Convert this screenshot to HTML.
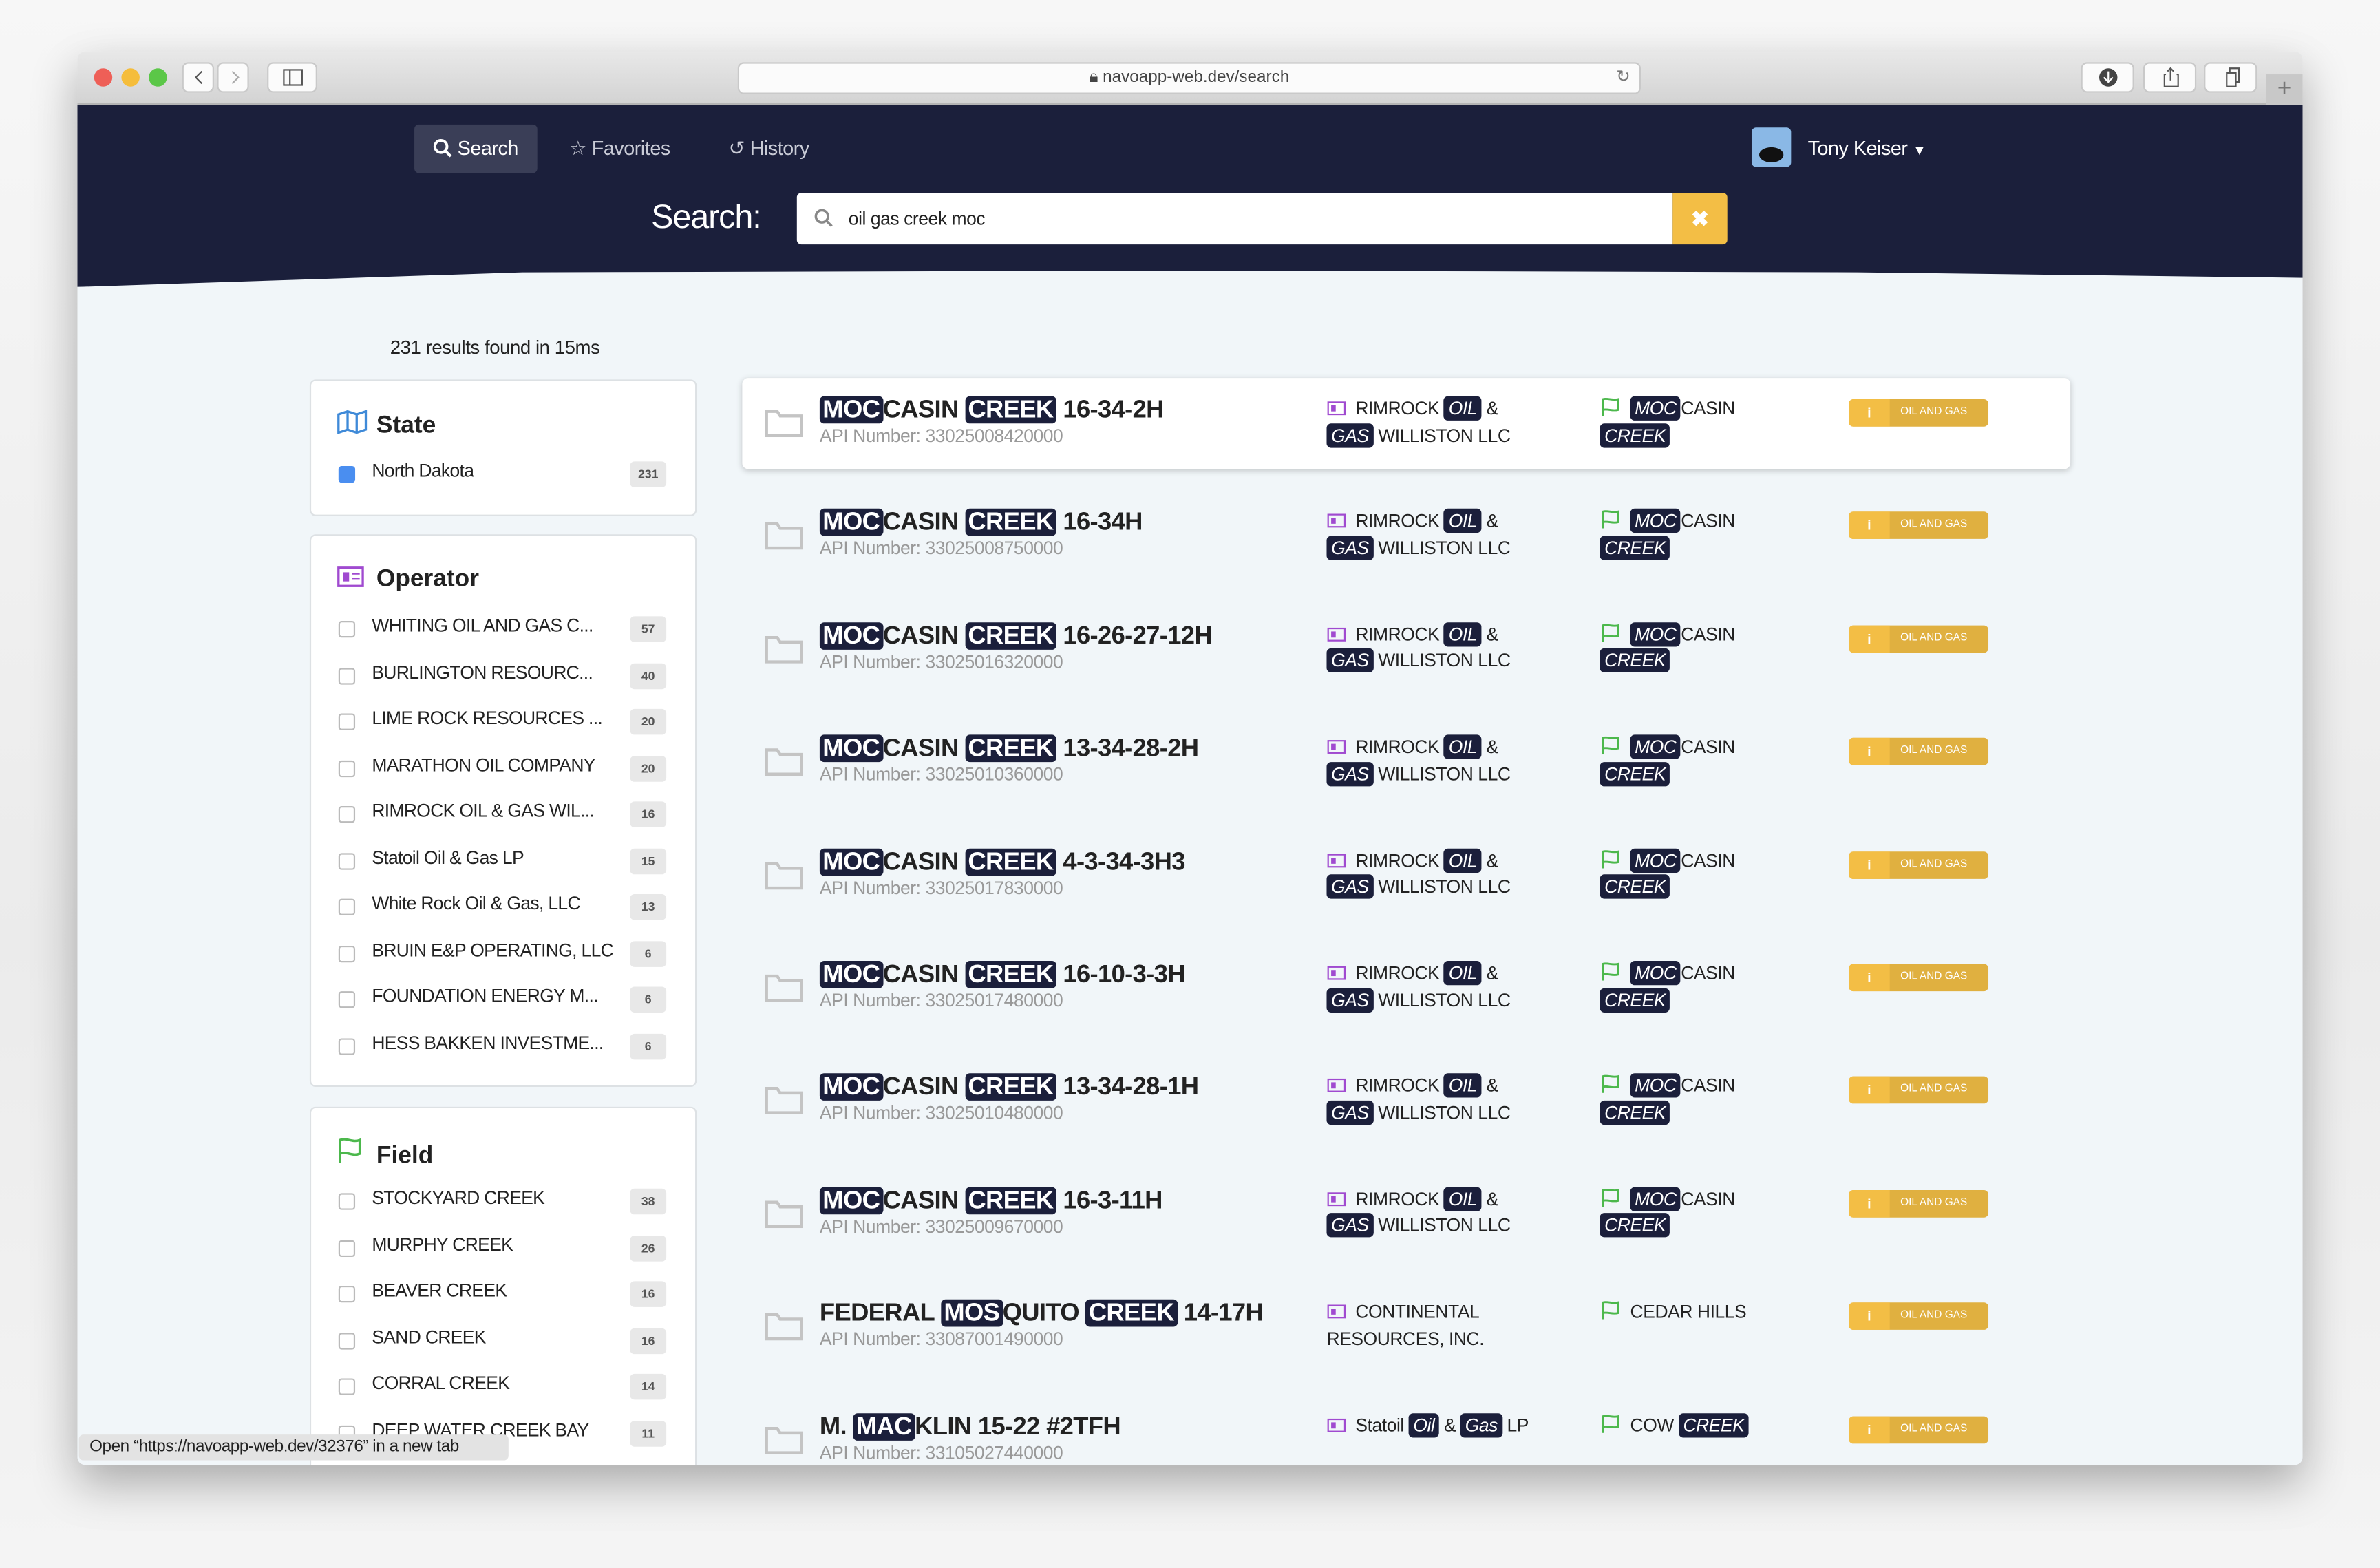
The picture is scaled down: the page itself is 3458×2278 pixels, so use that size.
<!DOCTYPE html>
<html><head><meta charset="utf-8"><style>
*{box-sizing:border-box;margin:0;padding:0}
html,body{width:3458px;height:2278px;overflow:hidden;background:#ececec}
#s{position:absolute;left:0;top:0;width:1568px;height:1033px;transform:scale(2.20536);transform-origin:0 0;font-family:"Liberation Sans",sans-serif;background:linear-gradient(#f7f7f7,#ebebeb 60%,#f4f4f4)}
.a{position:absolute}
#win{left:51px;top:34px;width:1466px;height:931px;background:#f1f6f9;border-radius:5px;overflow:hidden;box-shadow:0 12px 30px rgba(0,0,0,.3)}
#tb{left:0;top:0;width:1466px;height:35px;background:linear-gradient(#e8e8e8,#d3d3d3);border-bottom:1px solid #b5b5b5}
.dot{width:12px;height:12px;border-radius:50%;top:11px}
.btn{background:#fbfbfb;border:1px solid #c9c9c9;border-radius:4px;height:20px;top:7px}
#hdr{left:0;top:35px;width:1466px;height:120px;background:#1b1f3b;clip-path:polygon(0 0,100% 0,100% 95%,80% 92%,50% 91%,20% 92%,0 100%)}
.nav{color:#c9cbd6;font-size:13px;top:56px;letter-spacing:-.2px}
.card{background:#fff;border:1px solid #dde1e4;border-radius:4px}
.ft{font-size:16px;font-weight:bold;color:#222}
.it{font-size:12px;color:#222;left:40px;letter-spacing:-.3px;white-space:nowrap}
.cb{left:18px;width:11px;height:11px;border:1px solid #bbb;border-radius:2px;background:#fff}
.cnt{left:210px;width:24px;height:17px;background:#e8e8e8;border-radius:3px;font-size:8px;font-weight:bold;color:#555;text-align:center;line-height:17px}
.row{position:absolute;left:489px;width:875px;height:60px}
.t{position:absolute;left:51px;top:10px;font-size:16.5px;font-weight:bold;color:#222;white-space:nowrap;line-height:22px;letter-spacing:-.3px}
.h{background:#1b1f3b;color:#fff;border-radius:3px;padding:0 2px}
.api{position:absolute;left:51px;top:31px;font-size:12px;color:#999;white-space:nowrap;letter-spacing:-.2px}
.op,.fd{position:absolute;top:12px;font-size:12px;color:#222;line-height:17.5px;width:128px;letter-spacing:-.2px}
.op{left:385px}.fd{left:565px;width:100px}
.op .h,.fd .h{font-style:italic;padding:1px 3px}
.bd{position:absolute;left:729px;top:14px;width:92px;height:18px;border-radius:3px;background:#e0b040;overflow:hidden;font-size:7px;color:#fff;line-height:18px}
.bd i{position:absolute;left:0;top:0;width:27px;height:18px;background:#f3be45;font-style:normal;font-weight:bold;text-align:center;font-size:9px}
.bd b{position:absolute;left:34px;font-weight:normal}
.fo{position:absolute;left:15px;top:20px}
.oi{display:inline-block;vertical-align:-1px;margin-right:6px}
</style></head><body><div id="s">
<div id="win" class="a">
 <div id="tb" class="a">
  <div class="a dot" style="left:11px;background:#ee5f57"></div>
  <div class="a dot" style="left:29px;background:#f5bd3b"></div>
  <div class="a dot" style="left:47px;background:#5bc748"></div>
  <div class="a btn" style="left:69px;width:21px"><svg width="21" height="18"><path d="M12 5l-4 4 4 4" stroke="#555" fill="none"/></svg></div>
  <div class="a btn" style="left:92px;width:21px"><svg width="21" height="18"><path d="M9 5l4 4-4 4" stroke="#aaa" fill="none"/></svg></div>
  <div class="a btn" style="left:125px;width:33px"><svg width="33" height="18"><rect x="10" y="4" width="12" height="10" stroke="#555" fill="none"/><line x1="14" y1="4" x2="14" y2="14" stroke="#555"/></svg></div>
  <div class="a btn" style="left:435px;width:595px;height:21px;text-align:center;font-size:11px;color:#444;line-height:19px">🔒︎ navoapp-web.dev/search<span style="position:absolute;right:6px;color:#777">↻</span></div>
  <div class="a btn" style="left:1320px;width:35px"><svg width="35" height="18"><circle cx="17" cy="9" r="6" fill="#444"/><path d="M17 5v7M14 9l3 3 3-3" stroke="#fff" fill="none"/></svg></div>
  <div class="a btn" style="left:1361px;width:35px"><svg width="35" height="18"><path d="M14 7h-1v8h9v-8h-1M17 3v8M15 5l2-2 2 2" stroke="#555" fill="none"/></svg></div>
  <div class="a btn" style="left:1401px;width:35px"><svg width="35" height="18"><rect x="14" y="6" width="6" height="9" stroke="#555" fill="none"/><path d="M16 6V3h6v9h-2" stroke="#555" fill="none"/></svg></div>
  <div class="a" style="left:1442px;top:15px;width:24px;height:20px;background:#c8c8c8;color:#777;text-align:center;font-size:16px;line-height:20px">+</div>
 </div>
 <div id="hdr" class="a"></div>
 <div class="a" style="left:222px;top:48px;width:81px;height:32px;background:#3a3e57;border-radius:3px"></div>
 <div class="a nav" style="left:234px;color:#fff"><svg width="13" height="13" style="vertical-align:-2px"><circle cx="5.5" cy="5.5" r="4" stroke="#fff" stroke-width="1.8" fill="none"/><path d="M8.5 8.5l3.5 3.5" stroke="#fff" stroke-width="1.8"/></svg> Search</div>
 <div class="a nav" style="left:324px">☆ Favorites</div>
 <div class="a nav" style="left:429px">↺ History</div>
 <div class="a" style="left:1103px;top:50px;width:26px;height:26px;background:#8ab8e6;border-radius:3px"><div style="position:absolute;left:5px;top:13px;width:16px;height:10px;background:#111;border-radius:50%"></div></div>
 <div class="a" style="left:1140px;top:56px;font-size:13px;color:#fff;letter-spacing:-.2px">Tony Keiser <span style="font-size:9px">▼</span></div>
 <div class="a" style="left:378px;top:96px;font-size:22px;color:#fff;letter-spacing:-.5px">Search:</div>
 <div class="a" style="left:474px;top:93px;width:577px;height:34px;background:#fff;border-radius:3px 0 0 3px"></div>
 <div class="a" style="left:485px;top:103px"><svg width="13" height="13"><circle cx="5.5" cy="5.5" r="4" stroke="#888" stroke-width="1.6" fill="none"/><path d="M8.5 8.5l3.5 3.5" stroke="#888" stroke-width="1.6"/></svg></div>
 <div class="a" style="left:508px;top:103px;font-size:12px;color:#222;letter-spacing:-.2px">oil gas creek moc</div>
 <div class="a" style="left:1051px;top:93px;width:36px;height:34px;background:#f3be45;border-radius:0 3px 3px 0;color:#fff;text-align:center;line-height:34px;font-weight:bold;font-size:14px">✖</div>
</div>

<div class="a" style="left:257px;top:222px;font-size:12.5px;color:#222;letter-spacing:-.2px">231 results found in 15ms</div>

<div class="a card" style="left:204px;top:250px;width:255px;height:90px">
 <div class="a ft" style="left:17px;top:19px"><svg class="oi" width="20" height="16"><path d="M1 3l6-2 6 2 6-2v12l-6 2-6-2-6 2z M7 1v12 M13 3v12" stroke="#3f8ad8" stroke-width="1.5" fill="none"/></svg>State</div>
 <div class="a cb" style="top:56px;background:#4a8ef0;border-color:#4a8ef0"></div>
 <div class="a it" style="top:52px">North Dakota</div>
 <div class="a cnt" style="top:53px">231</div>
</div>

<div class="a card" style="left:204px;top:352px;width:255px;height:364px">
 <div class="a ft" style="left:17px;top:20px"><svg class="oi" width="20" height="14"><rect x="1" y="1" width="16" height="12" stroke="#a04ad0" stroke-width="1.5" fill="none"/><rect x="4" y="4" width="4" height="6" fill="#a04ad0"/><path d="M10 5h5M10 8h5" stroke="#a04ad0"/></svg>Operator</div>
 <div class="a cb" style="top:56px"></div><div class="a it" style="top:52px">WHITING OIL AND GAS C...</div><div class="a cnt" style="top:53px">57</div>
 <div class="a cb" style="top:87px"></div><div class="a it" style="top:83px">BURLINGTON RESOURC...</div><div class="a cnt" style="top:84px">40</div>
 <div class="a cb" style="top:117px"></div><div class="a it" style="top:113px">LIME ROCK RESOURCES ...</div><div class="a cnt" style="top:114px">20</div>
 <div class="a cb" style="top:148px"></div><div class="a it" style="top:144px">MARATHON OIL COMPANY</div><div class="a cnt" style="top:145px">20</div>
 <div class="a cb" style="top:178px"></div><div class="a it" style="top:174px">RIMROCK OIL &amp; GAS WIL...</div><div class="a cnt" style="top:175px">16</div>
 <div class="a cb" style="top:209px"></div><div class="a it" style="top:205px">Statoil Oil &amp; Gas LP</div><div class="a cnt" style="top:206px">15</div>
 <div class="a cb" style="top:239px"></div><div class="a it" style="top:235px">White Rock Oil &amp; Gas, LLC</div><div class="a cnt" style="top:236px">13</div>
 <div class="a cb" style="top:270px"></div><div class="a it" style="top:266px">BRUIN E&amp;P OPERATING, LLC</div><div class="a cnt" style="top:267px">6</div>
 <div class="a cb" style="top:300px"></div><div class="a it" style="top:296px">FOUNDATION ENERGY M...</div><div class="a cnt" style="top:297px">6</div>
 <div class="a cb" style="top:331px"></div><div class="a it" style="top:327px">HESS BAKKEN INVESTME...</div><div class="a cnt" style="top:328px">6</div>
</div>

<div class="a card" style="left:204px;top:729px;width:255px;height:236px;border-bottom:none;border-radius:4px 4px 0 0;overflow:hidden">
 <div class="a ft" style="left:17px;top:19px"><svg class="oi" width="20" height="18"><path d="M2 17V2c4-2 8 2 13 0v9c-5 2-9-2-13 0" stroke="#4cb84c" stroke-width="1.6" fill="none"/></svg>Field</div>
 <div class="a cb" style="top:56px"></div><div class="a it" style="top:52px">STOCKYARD CREEK</div><div class="a cnt" style="top:53px">38</div>
 <div class="a cb" style="top:87px"></div><div class="a it" style="top:83px">MURPHY CREEK</div><div class="a cnt" style="top:84px">26</div>
 <div class="a cb" style="top:117px"></div><div class="a it" style="top:113px">BEAVER CREEK</div><div class="a cnt" style="top:114px">16</div>
 <div class="a cb" style="top:148px"></div><div class="a it" style="top:144px">SAND CREEK</div><div class="a cnt" style="top:145px">16</div>
 <div class="a cb" style="top:178px"></div><div class="a it" style="top:174px">CORRAL CREEK</div><div class="a cnt" style="top:175px">14</div>
 <div class="a cb" style="top:209px"></div><div class="a it" style="top:205px">DEEP WATER CREEK BAY</div><div class="a cnt" style="top:206px">11</div>
</div>

<div class="row" style="top:249px;background:#fff;border-radius:4px;box-shadow:0 1px 4px rgba(0,0,0,.2)"><svg class="fo" width="25" height="19"><path d="M1 18V2h7l2 3h14v13z" stroke="#c4c4c4" stroke-width="2" fill="none"/></svg><div class="t"><span class="h">MOC</span>CASIN <span class="h">CREEK</span> 16-34-2H</div><div class="api">API Number: 33025008420000</div><div class="op"><svg class="oi" width="13" height="10"><rect x="1" y="1" width="11" height="8" stroke="#a04ad0" fill="none"/><rect x="3" y="3" width="3" height="4" fill="#a04ad0"/></svg>RIMROCK <span class="h">OIL</span> &amp; <span class="h">GAS</span> WILLISTON LLC</div><div class="fd"><svg class="oi" width="14" height="12"><path d="M2 12V1c3-1 6 1 10 0v7c-4 1-7-1-10 0" stroke="#4cb84c" stroke-width="1.3" fill="none"/></svg><span class="h">MOC</span>CASIN <span class="h">CREEK</span></div><div class="bd"><i>i</i><b>OIL AND GAS</b></div></div>

<div class="row" style="top:323.4px"><svg class="fo" width="25" height="19"><path d="M1 18V2h7l2 3h14v13z" stroke="#c4c4c4" stroke-width="2" fill="none"/></svg><div class="t"><span class="h">MOC</span>CASIN <span class="h">CREEK</span> 16-34H</div><div class="api">API Number: 33025008750000</div><div class="op"><svg class="oi" width="13" height="10"><rect x="1" y="1" width="11" height="8" stroke="#a04ad0" fill="none"/><rect x="3" y="3" width="3" height="4" fill="#a04ad0"/></svg>RIMROCK <span class="h">OIL</span> &amp; <span class="h">GAS</span> WILLISTON LLC</div><div class="fd"><svg class="oi" width="14" height="12"><path d="M2 12V1c3-1 6 1 10 0v7c-4 1-7-1-10 0" stroke="#4cb84c" stroke-width="1.3" fill="none"/></svg><span class="h">MOC</span>CASIN <span class="h">CREEK</span></div><div class="bd"><i>i</i><b>OIL AND GAS</b></div></div>

<div class="row" style="top:397.8px"><svg class="fo" width="25" height="19"><path d="M1 18V2h7l2 3h14v13z" stroke="#c4c4c4" stroke-width="2" fill="none"/></svg><div class="t"><span class="h">MOC</span>CASIN <span class="h">CREEK</span> 16-26-27-12H</div><div class="api">API Number: 33025016320000</div><div class="op"><svg class="oi" width="13" height="10"><rect x="1" y="1" width="11" height="8" stroke="#a04ad0" fill="none"/><rect x="3" y="3" width="3" height="4" fill="#a04ad0"/></svg>RIMROCK <span class="h">OIL</span> &amp; <span class="h">GAS</span> WILLISTON LLC</div><div class="fd"><svg class="oi" width="14" height="12"><path d="M2 12V1c3-1 6 1 10 0v7c-4 1-7-1-10 0" stroke="#4cb84c" stroke-width="1.3" fill="none"/></svg><span class="h">MOC</span>CASIN <span class="h">CREEK</span></div><div class="bd"><i>i</i><b>OIL AND GAS</b></div></div>

<div class="row" style="top:472.2px"><svg class="fo" width="25" height="19"><path d="M1 18V2h7l2 3h14v13z" stroke="#c4c4c4" stroke-width="2" fill="none"/></svg><div class="t"><span class="h">MOC</span>CASIN <span class="h">CREEK</span> 13-34-28-2H</div><div class="api">API Number: 33025010360000</div><div class="op"><svg class="oi" width="13" height="10"><rect x="1" y="1" width="11" height="8" stroke="#a04ad0" fill="none"/><rect x="3" y="3" width="3" height="4" fill="#a04ad0"/></svg>RIMROCK <span class="h">OIL</span> &amp; <span class="h">GAS</span> WILLISTON LLC</div><div class="fd"><svg class="oi" width="14" height="12"><path d="M2 12V1c3-1 6 1 10 0v7c-4 1-7-1-10 0" stroke="#4cb84c" stroke-width="1.3" fill="none"/></svg><span class="h">MOC</span>CASIN <span class="h">CREEK</span></div><div class="bd"><i>i</i><b>OIL AND GAS</b></div></div>

<div class="row" style="top:546.6px"><svg class="fo" width="25" height="19"><path d="M1 18V2h7l2 3h14v13z" stroke="#c4c4c4" stroke-width="2" fill="none"/></svg><div class="t"><span class="h">MOC</span>CASIN <span class="h">CREEK</span> 4-3-34-3H3</div><div class="api">API Number: 33025017830000</div><div class="op"><svg class="oi" width="13" height="10"><rect x="1" y="1" width="11" height="8" stroke="#a04ad0" fill="none"/><rect x="3" y="3" width="3" height="4" fill="#a04ad0"/></svg>RIMROCK <span class="h">OIL</span> &amp; <span class="h">GAS</span> WILLISTON LLC</div><div class="fd"><svg class="oi" width="14" height="12"><path d="M2 12V1c3-1 6 1 10 0v7c-4 1-7-1-10 0" stroke="#4cb84c" stroke-width="1.3" fill="none"/></svg><span class="h">MOC</span>CASIN <span class="h">CREEK</span></div><div class="bd"><i>i</i><b>OIL AND GAS</b></div></div>

<div class="row" style="top:621px"><svg class="fo" width="25" height="19"><path d="M1 18V2h7l2 3h14v13z" stroke="#c4c4c4" stroke-width="2" fill="none"/></svg><div class="t"><span class="h">MOC</span>CASIN <span class="h">CREEK</span> 16-10-3-3H</div><div class="api">API Number: 33025017480000</div><div class="op"><svg class="oi" width="13" height="10"><rect x="1" y="1" width="11" height="8" stroke="#a04ad0" fill="none"/><rect x="3" y="3" width="3" height="4" fill="#a04ad0"/></svg>RIMROCK <span class="h">OIL</span> &amp; <span class="h">GAS</span> WILLISTON LLC</div><div class="fd"><svg class="oi" width="14" height="12"><path d="M2 12V1c3-1 6 1 10 0v7c-4 1-7-1-10 0" stroke="#4cb84c" stroke-width="1.3" fill="none"/></svg><span class="h">MOC</span>CASIN <span class="h">CREEK</span></div><div class="bd"><i>i</i><b>OIL AND GAS</b></div></div>

<div class="row" style="top:695.4px"><svg class="fo" width="25" height="19"><path d="M1 18V2h7l2 3h14v13z" stroke="#c4c4c4" stroke-width="2" fill="none"/></svg><div class="t"><span class="h">MOC</span>CASIN <span class="h">CREEK</span> 13-34-28-1H</div><div class="api">API Number: 33025010480000</div><div class="op"><svg class="oi" width="13" height="10"><rect x="1" y="1" width="11" height="8" stroke="#a04ad0" fill="none"/><rect x="3" y="3" width="3" height="4" fill="#a04ad0"/></svg>RIMROCK <span class="h">OIL</span> &amp; <span class="h">GAS</span> WILLISTON LLC</div><div class="fd"><svg class="oi" width="14" height="12"><path d="M2 12V1c3-1 6 1 10 0v7c-4 1-7-1-10 0" stroke="#4cb84c" stroke-width="1.3" fill="none"/></svg><span class="h">MOC</span>CASIN <span class="h">CREEK</span></div><div class="bd"><i>i</i><b>OIL AND GAS</b></div></div>

<div class="row" style="top:769.8px"><svg class="fo" width="25" height="19"><path d="M1 18V2h7l2 3h14v13z" stroke="#c4c4c4" stroke-width="2" fill="none"/></svg><div class="t"><span class="h">MOC</span>CASIN <span class="h">CREEK</span> 16-3-11H</div><div class="api">API Number: 33025009670000</div><div class="op"><svg class="oi" width="13" height="10"><rect x="1" y="1" width="11" height="8" stroke="#a04ad0" fill="none"/><rect x="3" y="3" width="3" height="4" fill="#a04ad0"/></svg>RIMROCK <span class="h">OIL</span> &amp; <span class="h">GAS</span> WILLISTON LLC</div><div class="fd"><svg class="oi" width="14" height="12"><path d="M2 12V1c3-1 6 1 10 0v7c-4 1-7-1-10 0" stroke="#4cb84c" stroke-width="1.3" fill="none"/></svg><span class="h">MOC</span>CASIN <span class="h">CREEK</span></div><div class="bd"><i>i</i><b>OIL AND GAS</b></div></div>

<div class="row" style="top:844.2px"><svg class="fo" width="25" height="19"><path d="M1 18V2h7l2 3h14v13z" stroke="#c4c4c4" stroke-width="2" fill="none"/></svg><div class="t">FEDERAL <span class="h">MOS</span>QUITO <span class="h">CREEK</span> 14-17H</div><div class="api">API Number: 33087001490000</div><div class="op"><svg class="oi" width="13" height="10"><rect x="1" y="1" width="11" height="8" stroke="#a04ad0" fill="none"/><rect x="3" y="3" width="3" height="4" fill="#a04ad0"/></svg>CONTINENTAL RESOURCES, INC.</div><div class="fd"><svg class="oi" width="14" height="12"><path d="M2 12V1c3-1 6 1 10 0v7c-4 1-7-1-10 0" stroke="#4cb84c" stroke-width="1.3" fill="none"/></svg>CEDAR HILLS</div><div class="bd"><i>i</i><b>OIL AND GAS</b></div></div>

<div class="row" style="top:918.6px"><svg class="fo" width="25" height="19"><path d="M1 18V2h7l2 3h14v13z" stroke="#c4c4c4" stroke-width="2" fill="none"/></svg><div class="t">M. <span class="h">MAC</span>KLIN 15-22 #2TFH</div><div class="api">API Number: 33105027440000</div><div class="op" style="width:200px"><svg class="oi" width="13" height="10"><rect x="1" y="1" width="11" height="8" stroke="#a04ad0" fill="none"/><rect x="3" y="3" width="3" height="4" fill="#a04ad0"/></svg>Statoil <span class="h">Oil</span> &amp; <span class="h">Gas</span> LP</div><div class="fd" style="width:160px"><svg class="oi" width="14" height="12"><path d="M2 12V1c3-1 6 1 10 0v7c-4 1-7-1-10 0" stroke="#4cb84c" stroke-width="1.3" fill="none"/></svg>COW <span class="h">CREEK</span></div><div class="bd"><i>i</i><b>OIL AND GAS</b></div></div>

<div class="a" style="left:52px;top:945px;width:283px;height:17px;background:#e3e3e3;border-radius:3px;font-size:11px;color:#222;line-height:17px;padding-left:7px;letter-spacing:-.2px">Open “https://navoapp-web.dev/32376” in a new tab</div>
</div></body></html>
